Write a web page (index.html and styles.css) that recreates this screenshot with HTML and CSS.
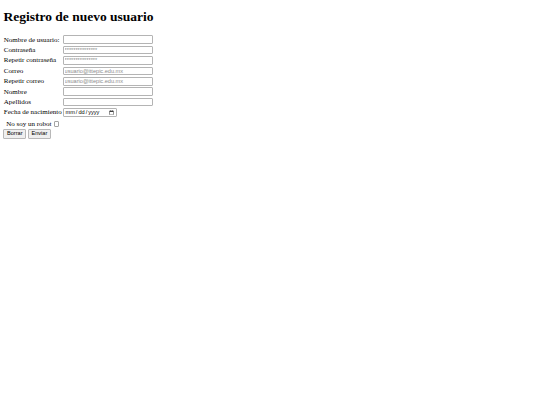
FILE: index.html
```html
<!DOCTYPE html>
<html>
<head>
<meta charset="utf-8">
<title>Registro</title>
<link rel="stylesheet" href="styles.css">
</head>
<body>
<h1 class="title">Registro de nuevo usuario</h1>
<form class="form">
<table class="grid">
<tr><td>Nombre de usuario:</td><td><input class="field" type="text"></td></tr>
<tr><td>Contraseña</td><td><input class="field" type="password" placeholder="***************"></td></tr>
<tr><td>Repetir contraseña</td><td><input class="field" type="password" placeholder="***************"></td></tr>
<tr><td>Correo</td><td><input class="field" type="email" placeholder="usuario@ittepic.edu.mx"></td></tr>
<tr><td>Repetir correo</td><td><input class="field" type="email" placeholder="usuario@ittepic.edu.mx"></td></tr>
<tr><td>Nombre</td><td><input class="field" type="text"></td></tr>
<tr><td>Apellidos</td><td><input class="field" type="text"></td></tr>
<tr><td>Fecha de nacimiento</td><td><input class="field date" type="date"></td></tr>
</table>
<label class="robot">No soy un robot <input class="check" type="checkbox"></label>
<div class="actions"><button class="btn" type="reset">Borrar</button><button class="btn" type="button">Enviar</button></div>
</form>
</body>
</html>
```
FILE: styles.css
```css
body {
  margin: 3.4px;
  font-family: "Liberation Serif", "Times New Roman", serif;
  font-size: 7px;
  background: #fff;
  color: #000;
}
.title {
  font-size: 13.5px;
  font-weight: bold;
  margin: 5.9px 0 9.2px;
}
.grid {
  border-collapse: separate;
  border-spacing: 0.85px;
}
.grid td {
  padding: 0.85px 0.42px;
  line-height: 8px;
}
.field {
  box-sizing: border-box;
  width: 90px;
  height: 8.6px;
  margin: 0;
  padding: 0 1px;
  border: 1px solid #b4b4b4;
  border-radius: 1px;
  font-family: "Liberation Sans", Arial, sans-serif;
  font-size: 5.6px;
  color: #000;
  background: #fff;
  vertical-align: middle;
}
.field::placeholder {
  color: #8c8c8c;
}
.date {
  width: 54px;
  padding: 0 1px;
}
.date::-webkit-calendar-picker-indicator {
  width: 5px;
  height: 5px;
  padding: 0;
  margin: 0 0.5px 0 0;
}
.robot {
  display: flex;
  align-items: center;
  gap: 2px;
  margin: 2.4px 0 0 2.8px;
  line-height: 8px;
}
.check {
  appearance: none;
  box-sizing: border-box;
  width: 5.4px;
  height: 5.4px;
  margin: 0 0 0 0.6px;
  border: 1px solid #a4a4a4;
  border-radius: 1px;
  background: #fff;
}
.actions {
  display: flex;
  gap: 1.7px;
  margin-top: 1.4px;
}
.btn {
  box-sizing: border-box;
  height: 9.4px;
  margin: 0;
  padding: 0 2.6px;
  border: 1px solid #b8b8b8;
  border-radius: 1px;
  background: #efefef;
  font-family: "Liberation Sans", Arial, sans-serif;
  font-size: 5.6px;
  color: #000;
  line-height: 1;
}
```
